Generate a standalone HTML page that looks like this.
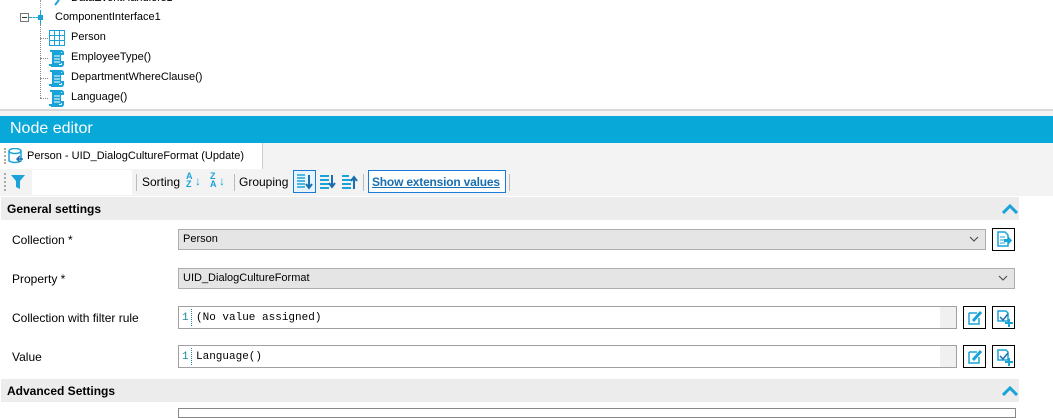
<!DOCTYPE html>
<html><head><meta charset="utf-8"><style>
*{margin:0;padding:0;box-sizing:border-box}
body{width:1053px;height:413px;overflow:hidden;background:#fff;font-family:"Liberation Sans",sans-serif;font-size:12px;color:#000;position:relative;white-space:nowrap}
.a{position:absolute}
.t{font-size:11px;white-space:nowrap}
.combo{position:absolute;background:#e5e5e5;border:1px solid #adadad;height:21px;padding:3px 4px;font-size:11px}
.combo .chev{position:absolute;right:6px;top:5px}
.ed{position:absolute;background:#fff;border:1px solid #a0a0a0;height:23px;font-family:"Liberation Mono",monospace;font-size:11px}
.ed .n{position:absolute;left:3px;top:5px;color:#1a8a9a}
.ed .ln{position:absolute;left:12px;top:2px;height:17px;border-left:1px dotted #1a8a9a}
.ed .tx{position:absolute;left:17px;top:5px}
.ed .sp{position:absolute;right:0;top:0;width:16px;height:21px;background:#f0f0f0}
.btn{position:absolute;width:23px;height:23px;border:1px solid #000;background:#fff}
.hdr{position:absolute;left:1px;width:1018px;background:#ececec;font-weight:bold;font-size:12px;padding:5px 6px}
.lbl{position:absolute;left:12px;font-size:12px}
</style></head><body>
<!-- tree -->
<div class="a" style="left:40px;top:0;height:8px;border-left:1px dotted #999"></div>
<svg class="a" style="left:50px;top:0" width="14" height="6"><path d="M5 5 L9 0" stroke="#1aa3d8" stroke-width="2"/></svg>
<div class="a t" style="left:71px;top:-8px">DataEventHandlers1</div>
<div class="a" style="left:20px;top:13px;width:9px;height:9px;border:1px solid #777"></div>
<div class="a" style="left:22px;top:17px;width:5px;height:1px;background:#333"></div>
<div class="a" style="left:29px;top:17px;width:10px;border-top:1px dashed #1aa3d8"></div>
<div class="a" style="left:38px;top:15px;width:5px;height:5px;background:#1aa3d8"></div>
<div class="a" style="left:40px;top:10px;height:14px;border-left:1px solid #1aa3d8"></div>
<div class="a t" style="left:55px;top:11px">ComponentInterface1</div>
<div class="a" style="left:40px;top:24px;height:74px;border-left:1px dotted #888"></div>
<div class="a" style="left:40px;top:38px;width:8px;border-top:1px dotted #888"></div>
<div class="a" style="left:40px;top:58px;width:8px;border-top:1px dotted #888"></div>
<div class="a" style="left:40px;top:78px;width:8px;border-top:1px dotted #888"></div>
<div class="a" style="left:40px;top:98px;width:8px;border-top:1px dotted #888"></div>
<svg class="a" style="left:49px;top:30px" width="16" height="16"><rect x="0.5" y="0.5" width="15" height="15" fill="#fff" stroke="#1aa3d8"/><path d="M0 5.5H16M0 10.5H16M5.5 0V16M10.5 0V16" stroke="#1aa3d8"/></svg>
<div class="a t" style="left:71px;top:31px">Person</div>
<svg class="a" style="left:49px;top:50px" width="16" height="17"><path d="M1 1H12Q14 1 14 3V4H4V14Q4 16 2 16H12Q14 16 14 14V12H4" fill="none" stroke="#1aa3d8" stroke-width="2"/><path d="M3 2H12V14H3Z" fill="#1aa3d8"/><path d="M5 6H11M5 9H11M5 12H11" stroke="#fff"/><path d="M0 15H10" stroke="#1aa3d8" stroke-width="2"/></svg>
<div class="a t" style="left:71px;top:51px">EmployeeType()</div>
<svg class="a" style="left:49px;top:70px" width="16" height="17"><path d="M1 1H12Q14 1 14 3V4H4V14Q4 16 2 16H12Q14 16 14 14V12H4" fill="none" stroke="#1aa3d8" stroke-width="2"/><path d="M3 2H12V14H3Z" fill="#1aa3d8"/><path d="M5 6H11M5 9H11M5 12H11" stroke="#fff"/><path d="M0 15H10" stroke="#1aa3d8" stroke-width="2"/></svg>
<div class="a t" style="left:71px;top:71px">DepartmentWhereClause()</div>
<svg class="a" style="left:49px;top:90px" width="16" height="17"><path d="M1 1H12Q14 1 14 3V4H4V14Q4 16 2 16H12Q14 16 14 14V12H4" fill="none" stroke="#1aa3d8" stroke-width="2"/><path d="M3 2H12V14H3Z" fill="#1aa3d8"/><path d="M5 6H11M5 9H11M5 12H11" stroke="#fff"/><path d="M0 15H10" stroke="#1aa3d8" stroke-width="2"/></svg>
<div class="a t" style="left:71px;top:91px">Language()</div>
<div class="a" style="left:0;top:109px;width:1053px;height:2px;background:#d8d8d8"></div>
<div class="a" style="left:0;top:111px;width:1053px;height:5px;background:#f4f4f4"></div>
<!-- blue bar -->
<div class="a" style="left:0;top:116px;width:1053px;height:27px;background:#08a8d8;color:#fff;font-size:16px;padding:4px 10px">Node editor</div>
<!-- tab row -->
<div class="a" style="left:0;top:143px;width:1053px;height:26px;background:#f3f3f3"></div>
<div class="a" style="left:0;top:143px;width:263px;height:26px;background:#fff;border-right:1px solid #ccc"></div>
<div class="a" style="left:4px;top:148px;height:16px;border-left:2px dotted #aaa"></div>
<svg class="a" style="left:8px;top:148px" width="16" height="16"><ellipse cx="7" cy="3" rx="6" ry="2.5" fill="none" stroke="#1aa3d8" stroke-width="1.5"/><path d="M1 3V13Q7 16 13 13V3" fill="none" stroke="#1aa3d8" stroke-width="1.5"/><path d="M9 11H15M12 8L9 11L12 14" stroke="#1a6fb0" stroke-width="1.5" fill="none"/></svg>
<div class="a t" style="left:27px;top:150px">Person - UID_DialogCultureFormat (Update)</div>
<!-- toolbar -->
<div class="a" style="left:0;top:169px;width:1053px;height:27px;background:#f3f3f3"></div>
<div class="a" style="left:4px;top:173px;height:18px;border-left:2px dotted #aaa"></div>
<svg class="a" style="left:10px;top:174px" width="16" height="16"><path d="M1 1H15L10 7V15L6 13V7Z" fill="#1aa3d8"/></svg>
<div class="a" style="left:32px;top:170px;width:100px;height:25px;background:#fff"></div>
<div class="a" style="left:136px;top:174px;height:17px;border-left:1px solid #bbb"></div>
<div class="a" style="left:142px;top:175px;font-size:12px">Sorting</div>
<div class="a" style="left:186px;top:172px;font-size:9px;font-weight:bold;color:#1aa3d8;line-height:8px">A<br>Z</div><div class="a" style="left:195px;top:174px;color:#1aa3d8;font-size:12px;font-weight:bold">↓</div>
<div class="a" style="left:210px;top:172px;font-size:9px;font-weight:bold;color:#1aa3d8;line-height:8px">Z<br>A</div><div class="a" style="left:219px;top:174px;color:#1aa3d8;font-size:12px;font-weight:bold">↓</div>
<div class="a" style="left:234px;top:174px;height:17px;border-left:1px solid #bbb"></div>
<div class="a" style="left:239px;top:175px;font-size:12px">Grouping</div>
<div class="a" style="left:293px;top:170px;width:23px;height:23px;border:1px solid #1a7ad8;background:#e8f4fc"></div>
<svg class="a" style="left:296px;top:173px" width="17" height="17"><path d="M1 2H9M1 5H9M1 8H9M1 11H9M1 14H9" stroke="#1aa3d8" stroke-width="1.5"/><path d="M13 2V14M10 11L13 15L16 11" stroke="#1a6fb0" stroke-width="2" fill="none"/></svg>
<svg class="a" style="left:319px;top:173px" width="17" height="17"><path d="M1 3H10M1 7H10M1 11H10M1 15H10" stroke="#1aa3d8" stroke-width="2"/><path d="M13 2V13M10 10L13 14L16 10" stroke="#1a6fb0" stroke-width="2" fill="none"/></svg>
<svg class="a" style="left:341px;top:173px" width="17" height="17"><path d="M1 3H8M1 7H10M1 11H10M1 15H10" stroke="#1aa3d8" stroke-width="2"/><path d="M13 5V16M10 8L13 4L16 8" stroke="#1a6fb0" stroke-width="2" fill="none"/></svg>
<div class="a" style="left:363px;top:174px;height:17px;border-left:1px solid #bbb"></div>
<div class="a" style="left:368px;top:170px;width:138px;height:23px;border:1px solid #1a7ad8;background:#fff;color:#1a6fb0;font-weight:bold;text-decoration:underline;font-size:12px;padding:4px 3px;letter-spacing:-0.2px;white-space:nowrap;overflow:hidden">Show extension values</div>
<div class="a" style="left:509px;top:174px;height:17px;border-left:1px solid #bbb"></div>
<!-- general -->
<div class="hdr" style="top:197px;height:23px">General settings</div>
<svg class="a" style="left:1002px;top:204px" width="16" height="10"><path d="M1 9L8 2L15 9" stroke="#1aa3d8" stroke-width="3" fill="none"/></svg>
<div class="lbl" style="top:233px">Collection *</div>
<div class="combo" style="left:178px;top:229px;width:808px">Person<svg class="chev" width="10" height="8"><path d="M1 2L5 6L9 2" stroke="#444" fill="none"/></svg></div>
<div class="btn" style="left:992px;top:228px"></div>
<svg class="a" style="left:996px;top:231px" width="16" height="17"><path d="M2 1H9L12 4V15H2Z" fill="#fff" stroke="#1aa3d8" stroke-width="1.5"/><path d="M4 6H9M4 9H8M4 12H9" stroke="#1aa3d8"/><path d="M8 8H12V5L16 9.5L12 14V11H8Z" fill="#1aa3d8"/></svg>
<div class="lbl" style="top:272px">Property *</div>
<div class="combo" style="left:178px;top:268px;width:837px">UID_DialogCultureFormat<svg class="chev" width="10" height="8"><path d="M1 2L5 6L9 2" stroke="#444" fill="none"/></svg></div>
<div class="lbl" style="top:311px">Collection with filter rule</div>
<div class="ed" style="left:178px;top:306px;width:779px"><span class="n">1</span><span class="ln"></span><span class="tx">(No value assigned)</span><div class="sp"></div></div>
<div class="lbl" style="top:350px">Value</div>
<div class="ed" style="left:178px;top:345px;width:779px"><span class="n">1</span><span class="ln"></span><span class="tx">Language()</span><div class="sp"></div></div>
<div class="btn" style="left:963px;top:306px"></div><div class="btn" style="left:992px;top:306px"></div>
<div class="btn" style="left:963px;top:345px"></div><div class="btn" style="left:992px;top:345px"></div>
<svg class="a" style="left:967px;top:310px" width="16" height="16"><path d="M2 3H10M2 3V14H12V8" fill="none" stroke="#1aa3d8" stroke-width="1.5"/><path d="M6 11L14 2" stroke="#1aa3d8" stroke-width="3"/></svg>
<svg class="a" style="left:967px;top:349px" width="16" height="16"><path d="M2 3H10M2 3V14H12V8" fill="none" stroke="#1aa3d8" stroke-width="1.5"/><path d="M6 11L14 2" stroke="#1aa3d8" stroke-width="3"/></svg>
<svg class="a" style="left:996px;top:310px" width="17" height="17"><path d="M2 1H10L12 3V11H2Z" fill="#fff" stroke="#1aa3d8" stroke-width="1.5"/><path d="M4 7L7 10L12 4" stroke="#1a6fb0" stroke-width="1.5" fill="none"/><path d="M13 9V17M9 13H17" stroke="#1aa3d8" stroke-width="2"/></svg>
<svg class="a" style="left:996px;top:349px" width="17" height="17"><path d="M2 1H10L12 3V11H2Z" fill="#fff" stroke="#1aa3d8" stroke-width="1.5"/><path d="M4 7L7 10L12 4" stroke="#1a6fb0" stroke-width="1.5" fill="none"/><path d="M13 9V17M9 13H17" stroke="#1aa3d8" stroke-width="2"/></svg>
<!-- advanced -->
<div class="hdr" style="top:379px;height:23px">Advanced Settings</div>
<svg class="a" style="left:1002px;top:386px" width="16" height="10"><path d="M1 9L8 2L15 9" stroke="#1aa3d8" stroke-width="3" fill="none"/></svg>
<div class="a" style="left:178px;top:408px;width:838px;height:10px;border:1px solid #888"></div>
</body></html>
